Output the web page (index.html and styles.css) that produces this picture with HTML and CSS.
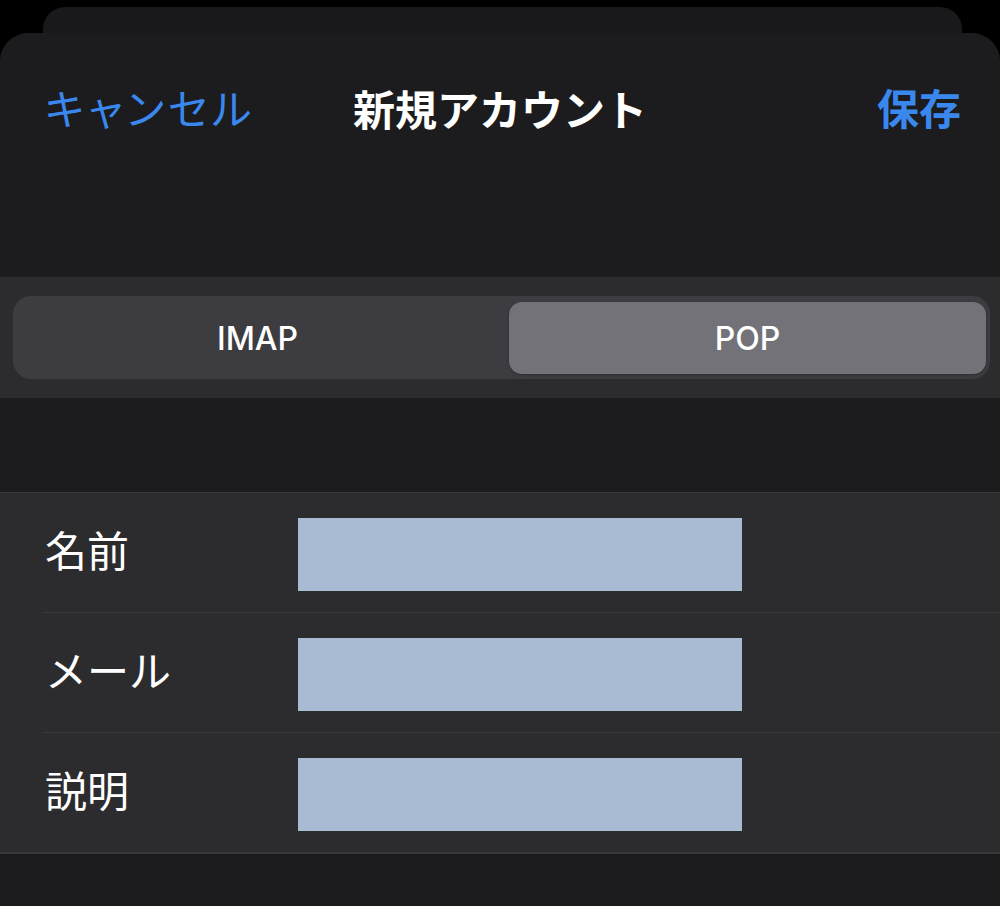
FILE: index.html
```html
<!DOCTYPE html>
<html lang="ja">
<head>
<meta charset="utf-8">
<title>新規アカウント</title>
<link rel="stylesheet" href="styles.css">
</head>
<body>
<div class="screen">
  <div class="back-card"></div>
  <div class="sheet">
    <header class="nav">
      <span class="nav-btn cancel">キャンセル</span>
      <span class="nav-title">新規アカウント</span>
      <span class="nav-btn save">保存</span>
    </header>
    <div class="band">
      <div class="segmented">
        <div class="seg">IMAP</div>
        <div class="seg selected">POP</div>
      </div>
    </div>
    <div class="list">
      <div class="row">
        <span class="label">名前</span>
        <span class="field"></span>
      </div>
      <div class="row">
        <span class="label">メール</span>
        <span class="field"></span>
      </div>
      <div class="row last">
        <span class="label">説明</span>
        <span class="field"></span>
      </div>
    </div>
  </div>
</div>
</body>
</html>
```

FILE: styles.css
```css
html, body {
  margin: 0;
  padding: 0;
  background: #000;
}
body {
  width: 1000px;
  height: 906px;
  overflow: hidden;
  font-family: "Noto Sans CJK JP", "Inter", sans-serif;
  color: #fff;
}
.screen {
  display: flex;
  flex-direction: column;
  height: 906px;
  padding-top: 7px;
  box-sizing: border-box;
}
.back-card {
  height: 26px;
  margin: 0 38px 0 43px;
  background: #19191b;
  border-radius: 22px 22px 0 0;
  flex: none;
}
.sheet {
  flex: 1;
  background: #1c1c1e;
  border-radius: 28px 28px 0 0;
  display: flex;
  flex-direction: column;
}
.nav {
  height: 150px;
  margin-bottom: 94px;
  padding: 0 39px 0 45px;
  display: flex;
  align-items: center;
  justify-content: space-between;
  position: relative;
}
.nav-btn {
  font-size: 42px;
  color: #3a88ee;
  line-height: 1;
  margin-bottom: 2px;
}
.cancel {
  font-feature-settings: "palt";
  letter-spacing: 4px;
}
.save {
  font-weight: 700;
}
.nav-title {
  font-size: 42px;
  font-weight: 700;
  line-height: 1;
  position: absolute;
  left: 50%;
  transform: translateX(-50%);
}
.band {
  background: #2c2c2e;
  padding: 19px 10px 19px 13px;
}
.segmented {
  height: 83px;
  box-sizing: border-box;
  background: #3d3c41;
  border-radius: 18px;
  padding: 6px 4px 5px 6px;
  display: grid;
  grid-template-columns: 1fr 1fr;
  column-gap: 13px;
}
.seg {
  display: flex;
  align-items: center;
  justify-content: center;
  font-family: "Inter", "Noto Sans", sans-serif;
  font-size: 32px;
  font-weight: 500;
  color: #fff;
  border-radius: 13px;
}
.seg.selected {
  background: #737278;
  box-shadow: 0 1px 3px rgba(0, 0, 0, 0.25);
}
.list {
  margin-top: 94px;
  background: #2c2c2e;
  border-top: 1px solid #38383b;
  border-bottom: 2px solid #38383b;
}
.row {
  height: 119px;
  margin-left: 43px;
  padding-left: 2px;
  border-bottom: 1px solid #3b3b3e;
  display: flex;
  align-items: center;
}
.row.last {
  border-bottom: none;
}
.label {
  width: 253px;
  flex: none;
  font-size: 42px;
  line-height: 1;
  color: #fff;
  margin-bottom: 8px;
}
.field {
  width: 444px;
  height: 73px;
  margin-top: 4px;
  background: #a9bbd3;
}
```
